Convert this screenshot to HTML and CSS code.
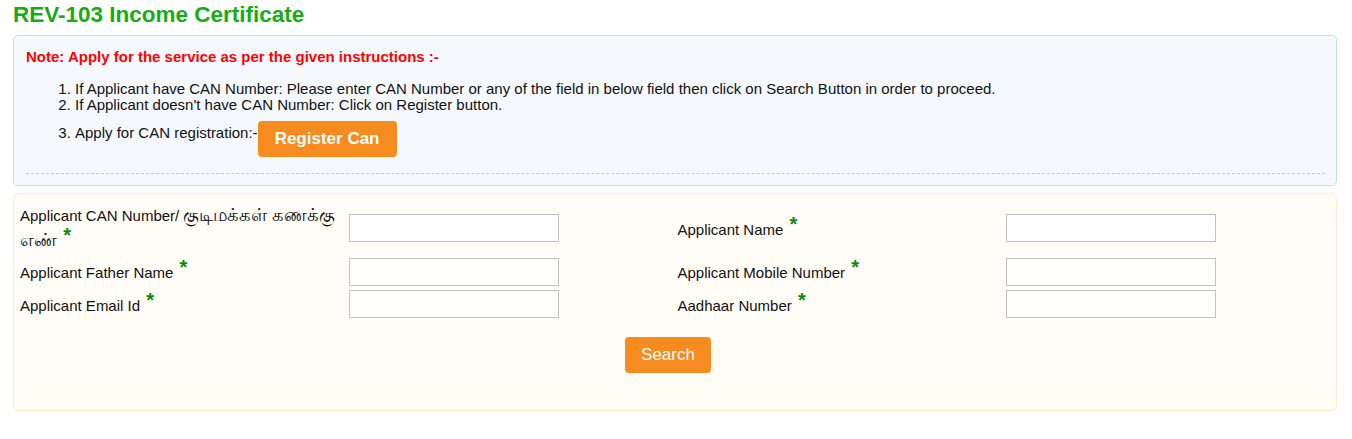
FILE: index.html
```html
<!DOCTYPE html>
<html lang="en">
<head>
<meta charset="utf-8">
<title>REV-103 Income Certificate</title>
<link rel="stylesheet" href="styles.css">
</head>
<body>
<div class="page">
  <h1 class="title">REV-103 Income Certificate</h1>

  <div class="info-box">
    <p class="note">Note: Apply for the service as per the given instructions :-</p>
    <ol class="steps">
      <li>If Applicant have CAN Number: Please enter CAN Number or any of the field in below field then click on Search Button in order to proceed.</li>
      <li>If Applicant doesn't have CAN Number: Click on Register button.</li>
      <li class="step-reg">Apply for CAN registration:-<button class="btn btn-reg" type="button">Register Can</button></li>
    </ol>
    <div class="divider"></div>
  </div>

  <div class="form-box">
    <div class="form-grid">
      <label class="lbl lbl-tall">Applicant CAN Number/ <span class="ta" lang="ta">குடிமக்கள் கணக்கு எண்</span> <span class="req">*</span></label>
      <div class="field"><input type="text"></div>
      <label class="lbl">Applicant Name <span class="req">*</span></label>
      <div class="field"><input type="text"></div>

      <label class="lbl">Applicant Father Name <span class="req">*</span></label>
      <div class="field"><input type="text"></div>
      <label class="lbl">Applicant Mobile Number <span class="req">*</span></label>
      <div class="field"><input type="text"></div>

      <label class="lbl">Applicant Email Id <span class="req">*</span></label>
      <div class="field"><input type="text"></div>
      <label class="lbl">Aadhaar Number <span class="req">*</span></label>
      <div class="field"><input type="text"></div>
    </div>
    <div class="actions">
      <button class="btn btn-search" type="button">Search</button>
    </div>
  </div>
</div>
</body>
</html>
```

FILE: styles.css
```css
html, body {
  margin: 0;
  padding: 0;
  background: #ffffff;
}

body {
  font-family: "Liberation Sans", Arial, "Noto Sans", sans-serif;
  font-size: 15px;
  color: #111111;
}

.page {
  padding: 2px 15px 0 13px;
}

.title {
  margin: 0 0 7px 0;
  font-size: 22.5px;
  line-height: 26px;
  font-weight: bold;
  color: #14ad14;
}

.info-box {
  background: #f5f9fe;
  border: 1px solid #bfe1ef;
  border-radius: 5px;
  padding: 13px 11px 11px 12px;
}

.note {
  margin: 0;
  font-weight: bold;
  color: #ff0000;
  line-height: 16px;
}

.steps {
  margin: 16px 0 0 0;
  padding-left: 49px;
  line-height: 16px;
}

.steps li {
  margin: 0;
}

.steps li.step-reg {
  margin-top: 8px;
}

.btn {
  font-family: "Liberation Sans", Arial, sans-serif;
  background: #f68b1f;
  color: #ffffff;
  border: none;
  border-radius: 4px;
  height: 36px;
  font-size: 17px;
  cursor: pointer;
}

.btn-reg {
  vertical-align: -6px;
  font-weight: bold;
  padding: 0 16px;
  width: 139px;
}

.divider {
  margin-top: 16px;
  border-top: 1px dashed #c6c9cc;
}

.form-box {
  margin-top: 7px;
  background: #fffdf6;
  border: 1px solid #fbeec8;
  border-radius: 6px;
  padding: 9px 1px 37px 6px;
}

.form-grid {
  display: grid;
  grid-template-columns: repeat(4, 1fr);
  row-gap: 4.5px;
  align-items: center;
}

.lbl {
  line-height: 17px;
}

.lbl-tall {
  line-height: 25px;
  height: 50px;
  padding-right: 4px;
}

.ta {
  font-size: 17.5px;
}

.req {
  color: #0a8a0a;
  font-weight: bold;
  font-size: 20px;
  line-height: 10px;
  margin-left: 2px;
  vertical-align: 4px;
}

.field input {
  display: block;
  box-sizing: border-box;
  width: 210px;
  height: 28px;
  border: 1px solid #c2c2c2;
  border-top-color: #bcbcbc;
  background: #ffffff;
  padding: 2px 4px;
  margin: 0;
  font-family: "Liberation Sans", Arial, sans-serif;
  font-size: 14px;
}

.actions {
  display: flex;
  justify-content: center;
  margin-top: 19px;
  padding-right: 19px;
}

.btn-search {
  font-weight: normal;
  padding: 0 16px;
  width: 86px;
}
```
